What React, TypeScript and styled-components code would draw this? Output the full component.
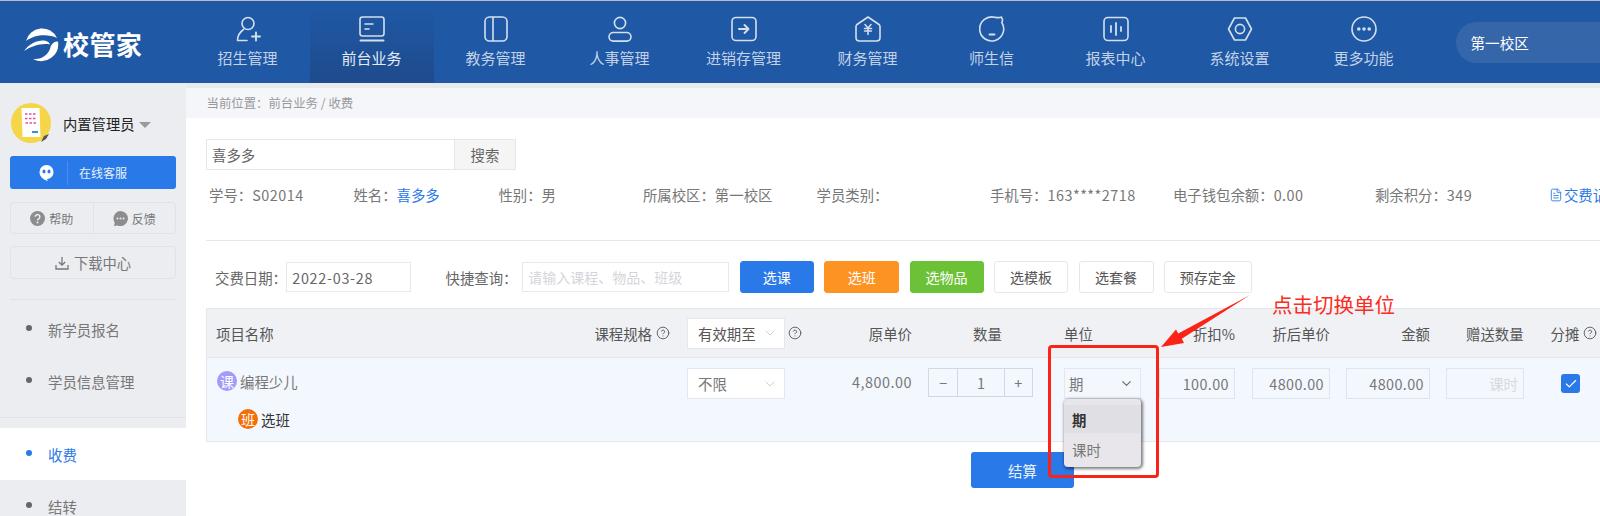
import React from "react";
import styled, { createGlobalStyle } from "styled-components";
import { CircleHelp, ChevronDown, Check, FileText } from "lucide-react";

const Global = createGlobalStyle`
  html, body { margin: 0; padding: 0; background: #fff; }
  body { font-family: "Noto Sans CJK SC", "Noto Sans", sans-serif; font-size: 14.4px; color: #666; }
  * { box-sizing: border-box; }
`;

const Page = styled.div`
  position: relative;
  width: 1600px;
  height: 516px;
  overflow: hidden;
  border-top: 1px solid #b9bcc2;
`;

const Header = styled.header`
  display: flex;
  height: 82px;
  background: #1f58a5;
`;
const Brand = styled.div`
  width: 185.5px;
  flex: none;
  display: flex;
  align-items: center;
  gap: 4px;
  padding: 3px 0 0 23px;
`;
const BrandName = styled.span`
  font-size: 26px;
  font-weight: 700;
  color: #fff;
  letter-spacing: 0.4px;
  line-height: 1;
`;
const NavTab = styled.div<{ $active?: boolean }>`
  width: 124px;
  flex: none;
  display: flex;
  flex-direction: column;
  align-items: center;
  padding-top: 15px;
  gap: 5px;
  background: ${(p) => (p.$active ? "linear-gradient(#1f58a5 10%, #1e4c8e 90%)" : "transparent")};
  color: ${(p) => (p.$active ? "#e4ebf5" : "#c3d2e7")};
  font-size: 15px;
  line-height: 22px;
  svg { display: block; }
`;
const Campus = styled.div`
  margin: 21px 0 0 30px;
  flex: 1;
  height: 41px;
  padding-left: 15px;
  display: flex;
  align-items: center;
  border-radius: 21px 0 0 21px;
  background: #3566aa;
  color: #fff;
  font-size: 14.6px;
`;

const Body = styled.div`
  display: flex;
  height: 433px;
`;

const Sidebar = styled.aside`
  width: 186px;
  flex: none;
  background: #ebedf1;
  padding-top: 20px;
`;
const UserRow = styled.div`
  display: flex;
  align-items: center;
  height: 40px;
  padding-left: 11px;
  gap: 12px;
`;
const Avatar = styled.svg`
  width: 40px;
  height: 40px;
  flex: none;
`;
const UserName = styled.span`
  font-size: 14.3px;
  color: #222;
`;
const Caret = styled.i`
  width: 0;
  height: 0;
  margin-left: -7px;
  margin-top: 3px;
  border-left: 6px solid transparent;
  border-right: 6px solid transparent;
  border-top: 6px solid #9a9a9a;
`;
const SideBlock = styled.div`
  padding: 0 10px 0 10px;
`;
const ServiceButton = styled.div`
  display: flex;
  align-items: center;
  height: 33px;
  margin-top: 13px;
  background: #2a79e8;
  border-radius: 3px;
  color: #e8f1fd;
  font-size: 12px;
`;
const ServiceIcon = styled.div`
  width: 58px;
  height: 24px;
  display: flex;
  align-items: center;
  justify-content: center;
  padding-left: 16px;
  margin-right: 11px;
  border-right: 1px solid #4a8eec;
`;
const HelpGroup = styled.div`
  display: flex;
  height: 32px;
  margin-top: 13px;
  border: 1px solid #e0e2e7;
  border-radius: 4px;
  font-size: 12px;
  color: #777;
`;
const HelpCell = styled.div`
  flex: 1;
  display: flex;
  align-items: center;
  justify-content: center;
  gap: 4px;
  & + & { border-left: 1px solid #e0e2e7; }
`;
const DownloadButton = styled.div`
  display: flex;
  align-items: center;
  justify-content: center;
  gap: 5px;
  height: 33px;
  margin-top: 12px;
  border: 1px solid #e0e2e7;
  border-radius: 4px;
  font-size: 14.3px;
  color: #777;
`;
const SideRule = styled.div`
  height: 1px;
  margin: 20px 0 3px;
  background: #dfe1e6;
`;
const SideItem = styled.div<{ $active?: boolean }>`
  display: flex;
  align-items: center;
  height: 52px;
  padding-left: 26px;
  gap: 16px;
  font-size: 14.4px;
  background: ${(p) => (p.$active ? "#fff" : "transparent")};
  color: ${(p) => (p.$active ? "#2a79e8" : "#777")};
  &::before {
    content: "";
    width: 6px;
    height: 6px;
    border-radius: 50%;
    margin-top: -2px;
    background: ${(p) => (p.$active ? "#2a79e8" : "#666")};
  }
`;
const FullRule = styled.div`
  height: 1px;
  margin: 10px 0 10px;
  background: #dfe1e6;
`;

const Main = styled.main`
  flex: 1;
  min-width: 0;
  border-top: 5px solid #e8eaee;
`;
const Breadcrumb = styled.div`
  height: 30px;
  padding-left: 20.5px;
  display: flex;
  align-items: center;
  background: #f5f6fa;
  color: #999;
  font-size: 12.4px;
`;
const Content = styled.div`
  padding-left: 20px;
`;
const SearchRow = styled.div`
  display: flex;
  height: 31px;
  margin-top: 21px;
`;
const SearchInput = styled.div`
  width: 248px;
  padding-left: 5px;
  display: flex;
  align-items: center;
  border: 1px solid #e6e7ec;
  border-right: 0;
  color: #666;
`;
const SearchButton = styled.div`
  width: 62px;
  display: flex;
  align-items: center;
  justify-content: center;
  background: #f5f5f5;
  border: 1px solid #e6e7ec;
  color: #666;
`;
const InfoRow = styled.div`
  display: grid;
  grid-template-columns: 144.4px 145px 144.5px 173.6px 173.4px 183px 202px 174px 60px;
  height: 22px;
  line-height: 22px;
  margin-top: 14px;
  padding-left: 3px;
  white-space: nowrap;
  color: #777;
`;
const Digits = styled.span`
  letter-spacing: 0.5px;
`;
const Blue = styled.span`
  color: #2a79e8;
`;
const RecordLink = styled.span`
  display: inline-flex;
  align-items: center;
  gap: 1px;
  color: #2a79e8;
`;
const Rule = styled.div`
  height: 1px;
  margin-top: 34px;
  background: #e6e7ee;
`;
const Toolbar = styled.div`
  display: flex;
  align-items: center;
  height: 32px;
  margin-top: 20px;
  padding-left: 9px;
  gap: 10.25px;
  color: #666;
  white-space: nowrap;
`;
const ToolLabel = styled.span<{ $gap: number; $before?: number }>`
  width: 64px;
  margin-left: ${(p) => p.$before ?? 0}px;
  margin-right: ${(p) => p.$gap}px;
`;
const TextBox = styled.div<{ $w: number; $muted?: boolean }>`
  width: ${(p) => p.$w}px;
  height: 30px;
  flex: none;
  display: flex;
  align-items: center;
  padding-left: 5px;
  border: 1px solid #e8e9ef;
  color: ${(p) => (p.$muted ? "#d4d5da" : "#666")};
  font-size: ${(p) => (p.$muted ? 14 : 14.4)}px;
  letter-spacing: ${(p) => (p.$muted ? 0 : 0.7)}px;
`;
const ToolButton = styled.div<{ $w: number; $bg?: string }>`
  width: ${(p) => p.$w}px;
  height: 32px;
  flex: none;
  display: flex;
  align-items: center;
  justify-content: center;
  border-radius: 3px;
  font-size: 14px;
  background: ${(p) => p.$bg ?? "#fff"};
  color: ${(p) => (p.$bg ? "#fff" : "#555")};
  border: 1px solid ${(p) => p.$bg ?? "#e6e7ee"};
`;

const COLS = "480px 121px 120px 136px 95px 93px 94px 100px 154px";
const Table = styled.div`
  margin-top: 15px;
  width: 1394px;
  border-left: 1px solid #e5e7ee;
  border-top: 1px solid #e5e7ee;
  border-bottom: 1px solid #e5e7ee;
`;
const HeadRow = styled.div`
  display: grid;
  grid-template-columns: ${COLS};
  height: 49px;
  align-items: center;
  background: #f0f1f5;
  border-bottom: 1px solid #e5e7ee;
  color: #555;
  white-space: nowrap;
`;
const HeadCell = styled.div<{ $w?: number; $pl?: number; $right?: boolean }>`
  display: flex;
  align-items: center;
  gap: 4px;
  width: ${(p) => (p.$w ? `${p.$w}px` : "auto")};
  padding-left: ${(p) => p.$pl ?? 0}px;
  justify-content: ${(p) => (p.$right ? "flex-end" : "flex-start")};
`;
const NameHead = styled.div`
  display: flex;
  align-items: center;
  justify-content: space-between;
  padding: 0 17px 0 9px;
`;
const Muted = styled.span<{ $before?: number }>`
  display: inline-flex;
  align-items: center;
  gap: 4px;
  margin-left: ${(p) => p.$before ?? 0}px;
`;
const DataRow = styled.div`
  display: grid;
  grid-template-columns: ${COLS};
  height: 83px;
  padding-top: 10px;
  align-items: start;
  background: #f3f7fe;
  color: #777;
`;
const NameCell = styled.div`
  display: flex;
  flex-direction: column;
  gap: 18px;
  padding: 3px 0 0 10px;
`;
const NameLine = styled.div<{ $indent?: boolean; $dark?: boolean }>`
  display: flex;
  align-items: center;
  gap: 3px;
  height: 20px;
  padding-left: ${(p) => (p.$indent ? 21 : 0)}px;
  color: ${(p) => (p.$dark ? "#333" : "#777")};
`;
const Badge = styled.span<{ $bg: string }>`
  width: 20px;
  height: 20px;
  border-radius: 50%;
  display: flex;
  align-items: center;
  justify-content: center;
  background: ${(p) => p.$bg};
  color: #fff;
  font-size: 14px;
  line-height: 1;
`;
const SelectBox = styled.div<{ $w: number; $bg?: string; $pl?: number }>`
  position: relative;
  width: ${(p) => p.$w}px;
  height: 31px;
  display: flex;
  align-items: center;
  justify-content: space-between;
  padding: 0 6px 0 ${(p) => p.$pl ?? 10}px;
  background: ${(p) => p.$bg ?? "#fff"};
  border: 1px solid #e4e7ee;
`;
const SelectRow = styled.div`
  display: flex;
  align-items: center;
  gap: 3px;
  color: #555;
`;
const Price = styled.div`
  padding: 3px 16px 0 0;
  text-align: right;
  letter-spacing: 0.5px;
`;
const Stepper = styled.div`
  display: flex;
  width: 105px;
  height: 29px;
  border: 1px solid #d3d7de;
`;
const StepCell = styled.div<{ $w: number }>`
  width: ${(p) => p.$w}px;
  display: flex;
  align-items: center;
  justify-content: center;
  & + & { border-left: 1px solid #d3d7de; }
`;
const NumBox = styled.div<{ $w: number; $ghost?: boolean }>`
  width: ${(p) => p.$w}px;
  height: 31px;
  display: flex;
  align-items: center;
  justify-content: flex-end;
  padding-right: 5px;
  letter-spacing: ${(p) => (p.$ghost ? 0 : 0.4)}px;
  border: 1px solid #e0e4eb;
  color: ${(p) => (p.$ghost ? "#d8dade" : "#777")};
`;
const GiftCell = styled.div`
  display: flex;
`;
const CheckBox = styled.div`
  width: 19px;
  height: 19px;
  margin: 6px 0 0 37px;
  display: flex;
  align-items: center;
  justify-content: center;
  border-radius: 3px;
  background: #2a79e8;
  color: #fff;
`;
const Menu = styled.div`
  position: absolute;
  left: -1px;
  top: 30px;
  width: 77px;
  height: 68px;
  padding-top: 6px;
  z-index: 2;
  background: #e8e6ea;
  border-radius: 4px;
  box-shadow: 1px 1px 3px 1px rgba(0, 0, 0, 0.5);
`;
const MenuItem = styled.div<{ $on?: boolean }>`
  height: 28px;
  padding-left: 8px;
  display: flex;
  align-items: center;
  background: ${(p) => (p.$on ? "#e0dfe3" : "transparent")};
  color: ${(p) => (p.$on ? "#333" : "#777")};
  font-weight: ${(p) => (p.$on ? 700 : 400)};
  margin-bottom: 2px;
`;
const Footer = styled.div`
  padding: 10px 0 0 765px;
`;
const Settle = styled.div`
  width: 103px;
  height: 36px;
  display: flex;
  align-items: center;
  justify-content: center;
  border-radius: 3px;
  background: #2a79e8;
  color: #eaf2fd;
  font-size: 14.4px;
`;

const CalloutBox = styled.div`
  position: absolute;
  left: 1048px;
  top: 344px;
  width: 111px;
  height: 133px;
  border: 3px solid #fb2318;
  border-radius: 4px;
  z-index: 3;
`;
const CalloutText = styled.div`
  position: absolute;
  left: 1272px;
  top: 288px;
  font-size: 20.5px;
  line-height: 30px;
  color: #fb2c22;
  z-index: 3;
`;
const CalloutArrow = styled.svg`
  position: absolute;
  left: 1150px;
  top: 284px;
  z-index: 3;
`;

const Ico: React.FC<{ children: React.ReactNode }> = ({ children }) => (
  <svg width="26" height="26" viewBox="0 0 26 26" fill="none" stroke="#d5dfee" strokeWidth="1.6" strokeLinecap="round" strokeLinejoin="round">
    {children}
  </svg>
);

const navItems: { label: string; active?: boolean; icon: React.ReactNode }[] = [
  { label: "招生管理", icon: <><circle cx="13" cy="7.5" r="6" /><path d="M8.5 13.5C5 16 2.5 20 2.5 24.5H12" /><path d="M17 20.5h8M21 16.5v8" strokeWidth="1.9" /></> },
  { label: "前台业务", active: true, icon: <><rect x="1" y="1" width="24" height="19" rx="2.5" /><path d="M1.5 24.5h23" strokeWidth="2" /><path d="M6 8h8M6 13h4" /></> },
  { label: "教务管理", icon: <><rect x="2" y="1" width="22" height="24" rx="4.5" /><path d="M10 1.5v23" /></> },
  { label: "人事管理", icon: <><circle cx="13" cy="7" r="5.6" /><rect x="2" y="16.5" width="22" height="8.6" rx="4.3" /></> },
  { label: "进销存管理", icon: <><rect x="1" y="1.5" width="24" height="23" rx="4" /><path d="M8 13h9.5M13.5 9l4 4-4 4" strokeWidth="1.9" /></> },
  { label: "财务管理", icon: <><path d="M13 1l11 7.5c.7.5 1 1 1 2v11c0 2-1.3 3.5-3.5 3.5h-17C2.3 25 1 23.5 1 21.5v-11c0-1 .3-1.5 1-2z" /><path d="M10 8.5l3 3.5 3-3.500M9.5 12.5h7M9.5 15h7M13 12v6.5" strokeWidth="1.5" /></> },
  { label: "师生信", icon: <><path d="M22.5 1.5c1.2 1.3 1.200 3.300.3 5A12 12 0 1 1 15.500 1.300c2.500.3 5 .8 7-.3z" /><path d="M10.5 18.5h5" strokeWidth="1.8" /></> },
  { label: "报表中心", icon: <><rect x="1" y="1.5" width="24" height="23" rx="4" /><path d="M8 10v6M13 7v12M18 11v4" strokeWidth="1.8" /></> },
  { label: "系统设置", icon: <><path d="M7.5 2h11l6 11-6 11h-11l-6-11z" /><circle cx="13" cy="13" r="4.6" /></> },
  { label: "更多功能", icon: <><circle cx="13" cy="13" r="12" /><circle cx="7.8" cy="13" r="1" fill="#d5dfee" /><circle cx="13" cy="13" r="1" fill="#d5dfee" /><circle cx="18.2" cy="13" r="1" fill="#d5dfee" /></> },
];

const info: React.ReactNode[] = [
  <>学号：<Digits>S02014</Digits></>,
  <>姓名：<Blue>喜多多</Blue></>,
  "性别：男",
  "所属校区：第一校区",
  "学员类别：",
  <>手机号：<Digits>163****2718</Digits></>,
  <>电子钱包余额：<Digits>0.00</Digits></>,
  <>剩余积分：<Digits>349</Digits></>,
  <RecordLink><FileText size={14} strokeWidth={1.5} />交费记录</RecordLink>,
];

const tools: { t: string; w: number; bg?: string }[] = [
  { t: "选课", w: 74.5, bg: "#2a79e8" },
  { t: "选班", w: 75, bg: "#fd9322" },
  { t: "选物品", w: 74, bg: "#6bc236" },
  { t: "选模板", w: 74.5 },
  { t: "选套餐", w: 75 },
  { t: "预存定金", w: 88 },
];

const Help = () => <CircleHelp size={14} strokeWidth={1.5} color="#555" />;

export default function App() {
  return (
    <>
      <Global />
      <Page>
        <Header>
          <Brand>
            <svg width="36" height="36" viewBox="0 0 36 36" fill="#fff">
              <path d="M3 15A16.500 16.500 0 0 1 34 12C26 8 12 8 3 15z" />
              <path d="M1 25C6 18 14 14 21 14.500C24 14.800 26 16 27 18.500C18 17 9 20 1 25z" />
              <path d="M35 15.500A17 17 0 0 1 10 33C19 34 26 28 27.500 21C28.500 17.500 31 15.500 35 15.500z" />
            </svg>
            <BrandName>校管家</BrandName>
          </Brand>
          {navItems.map((n) => (
            <NavTab key={n.label} $active={n.active}>
              <Ico>{n.icon}</Ico>
              {n.label}
            </NavTab>
          ))}
          <Campus>第一校区</Campus>
        </Header>
        <Body>
          <Sidebar>
            <UserRow>
              <Avatar viewBox="0 0 40 40">
                <circle cx="20" cy="20" r="20" fill="#f4d648" />
                <path d="M30 39l3-6 5-2-3 5z" fill="#555" />
                <path d="M10.500 5L28.500 5 29.500 34 11.500 34z" fill="#fff" />
                <path d="M14 11h2.500M18 11h2.500M22 11h2.500M14 15.500h2.500M18 15.500h2.500M22 15.500h2.500M14.500 20h2.500M18.500 20h2.500M22.500 20h2.500" stroke="#d8559a" strokeWidth="1.6" />
                <path d="M21 29h6" stroke="#3a8ae8" strokeWidth="2" />
              </Avatar>
              <UserName>内置管理员</UserName>
              <Caret />
            </UserRow>
            <SideBlock>
              <ServiceButton>
                <ServiceIcon>
                  <svg width="15" height="16" viewBox="0 0 15 16">
                    <path d="M7.5 0a7 7 0 0 1 7 7c0 4-3 7-6.500 7l.8 2C5 15 .5 12 .5 7a7 7 0 0 1 7-7z" fill="#fff" />
                    <ellipse cx="5" cy="6.5" rx="1.5" ry="2" fill="#2a79e8" />
                    <ellipse cx="10" cy="6.5" rx="1.5" ry="2" fill="#2a79e8" />
                  </svg>
                </ServiceIcon>
                在线客服
              </ServiceButton>
              <HelpGroup>
                <HelpCell>
                  <svg width="15" height="15" viewBox="0 0 15 15">
                    <circle cx="7.5" cy="7.5" r="7.5" fill="#8d8d8f" />
                    <path d="M5.200 5.800a2.300 2.300 0 1 1 3.500 2c-.8.500-1.200.900-1.200 1.700" fill="none" stroke="#ebedf1" strokeWidth="1.5" />
                    <circle cx="7.5" cy="11.5" r="1" fill="#ebedf1" />
                  </svg>
                  帮助
                </HelpCell>
                <HelpCell>
                  <svg width="15" height="15" viewBox="0 0 15 15">
                    <path d="M7.5 0a7.500 7.500 0 1 1-3 14.400L1 15l.8-3.300A7.500 7.500 0 0 1 7.500 0z" fill="#8d8d8f" />
                    <circle cx="4.5" cy="7.5" r="1" fill="#ebedf1" />
                    <circle cx="7.5" cy="7.5" r="1" fill="#ebedf1" />
                    <circle cx="10.5" cy="7.5" r="1" fill="#ebedf1" />
                  </svg>
                  反馈
                </HelpCell>
              </HelpGroup>
              <DownloadButton>
                <svg width="14" height="14" viewBox="0 0 14 14" fill="none" stroke="#777" strokeWidth="1.3">
                  <path d="M7 1v8M3.800 6L7 9.200 10.200 6M1 9v4h12V9" />
                </svg>
                下载中心
              </DownloadButton>
              <SideRule />
            </SideBlock>
            <SideItem>新学员报名</SideItem>
            <SideItem>学员信息管理</SideItem>
            <FullRule />
            <SideItem $active>收费</SideItem>
            <SideItem>结转</SideItem>
          </Sidebar>
          <Main>
            <Breadcrumb>当前位置：前台业务 / 收费</Breadcrumb>
            <Content>
              <SearchRow>
                <SearchInput>喜多多</SearchInput>
                <SearchButton>搜索</SearchButton>
              </SearchRow>
              <InfoRow>
                {info.map((c, i) => (
                  <span key={i}>{c}</span>
                ))}
              </InfoRow>
              <Rule />
              <Toolbar>
                <ToolLabel $gap={-3}>交费日期：</ToolLabel>
                <TextBox $w={125}>2022-03-28</TextBox>
                <ToolLabel $gap={2.5} $before={24}>快捷查询：</ToolLabel>
                <TextBox $w={207} $muted>请输入课程、物品、班级</TextBox>
                {tools.map((b) => (
                  <ToolButton key={b.t} $w={b.w} $bg={b.bg}>{b.t}</ToolButton>
                ))}
              </Toolbar>
              <Table>
                <HeadRow>
                  <NameHead>
                    <span>项目名称</span>
                    <Muted>课程规格<Help /></Muted>
                  </NameHead>
                  <SelectRow>
                    <SelectBox $w={98}>
                      有效期至
                      <ChevronDown size={16} strokeWidth={1} color="#b5b8bf" />
                    </SelectBox>
                    <Help />
                  </SelectRow>
                  <HeadCell $right $w={104}>原单价</HeadCell>
                  <HeadCell $pl={45}>数量</HeadCell>
                  <HeadCell>单位</HeadCell>
                  <HeadCell $right $w={76}>折扣%</HeadCell>
                  <HeadCell $right $w={78}>折后单价</HeadCell>
                  <HeadCell $right $w={84}>金额</HeadCell>
                  <HeadCell $pl={20}>
                    赠送数量
                    <Muted $before={23}>分摊<Help /></Muted>
                  </HeadCell>
                </HeadRow>
                <DataRow>
                  <NameCell>
                    <NameLine>
                      <Badge $bg="#a29bfb">课</Badge>
                      编程少儿
                    </NameLine>
                    <NameLine $indent $dark>
                      <Badge $bg="#f56e06">班</Badge>
                      选班
                    </NameLine>
                  </NameCell>
                  <SelectBox $w={98}>
                    不限
                    <ChevronDown size={16} strokeWidth={1} color="#b5b8bf" />
                  </SelectBox>
                  <Price>4,800.00</Price>
                  <Stepper>
                    <StepCell $w={29}>−</StepCell>
                    <StepCell $w={47}>1</StepCell>
                    <StepCell $w={29}>+</StepCell>
                  </Stepper>
                  <SelectBox $w={77} $bg="#f3f7fe" $pl={4}>
                    期
                    <ChevronDown size={15} strokeWidth={1.8} color="#666" />
                    <Menu>
                      <MenuItem $on>期</MenuItem>
                      <MenuItem>课时</MenuItem>
                    </Menu>
                  </SelectBox>
                  <NumBox $w={76}>100.00</NumBox>
                  <NumBox $w={78}>4800.00</NumBox>
                  <NumBox $w={84}>4800.00</NumBox>
                  <GiftCell>
                    <NumBox $w={78} $ghost>课时</NumBox>
                    <CheckBox><Check size={14} strokeWidth={2} /></CheckBox>
                  </GiftCell>
                </DataRow>
              </Table>
              <Footer>
                <Settle>结算</Settle>
              </Footer>
            </Content>
          </Main>
        </Body>
        <CalloutBox />
        <CalloutText>点击切换单位</CalloutText>
        <CalloutArrow width="110" height="70" viewBox="1150 285 110 70">
          <polygon points="1161,347 1176,329.500 1178.200,333.500 1250,295 1181.800,338.800 1184,343" fill="#fb2318" />
        </CalloutArrow>
      </Page>
    </>
  );
}
